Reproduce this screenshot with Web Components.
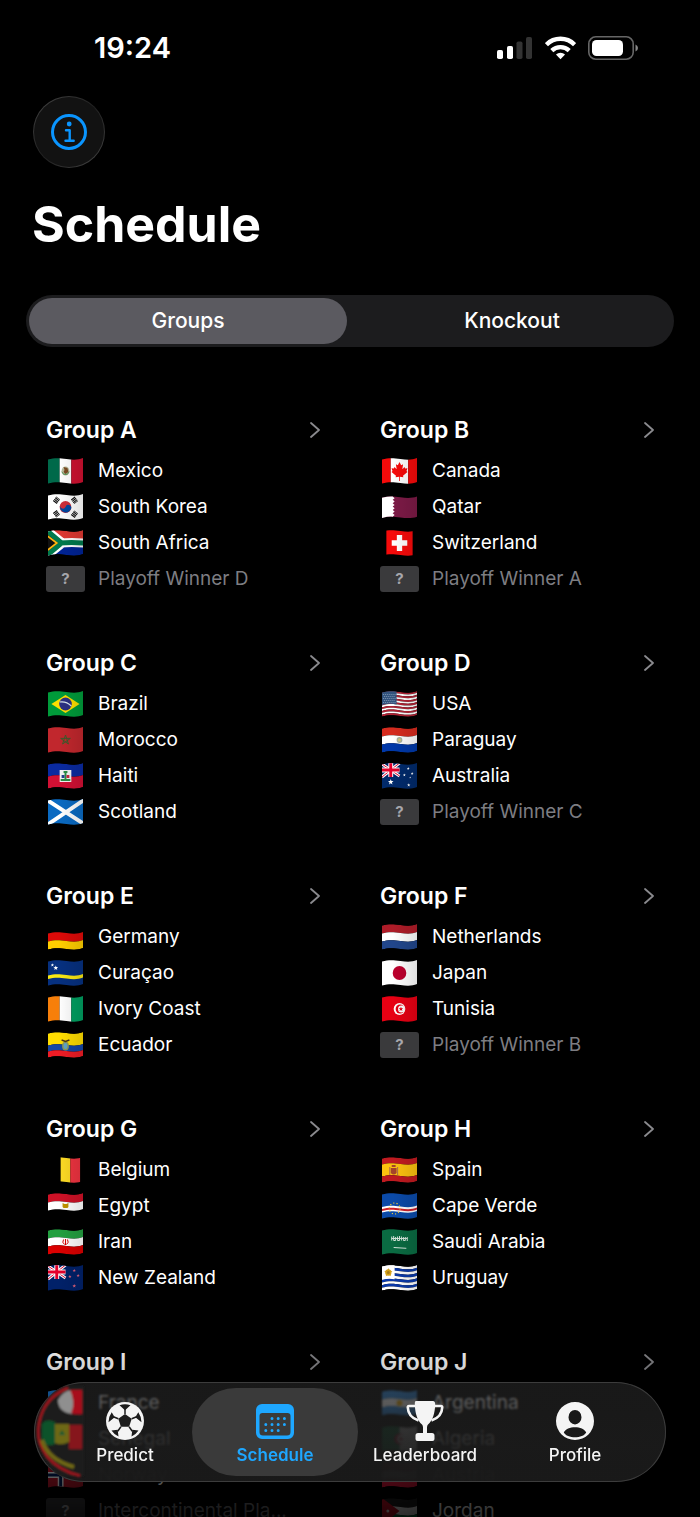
<!DOCTYPE html>
<html lang="en">
<head>
<meta charset="utf-8">
<meta name="viewport" content="width=device-width, initial-scale=1">
<title>Schedule</title>
<style>
  html, body {
    margin: 0;
    height: 100%;
    background: #000;
    color: #fff;
    font-family: Inter, "Liberation Sans", sans-serif;
  }
</style>
</head>
<body>
<schedule-app>
  <status-bar slot="status">19:24</status-bar>
  <info-button slot="header"></info-button>
  <page-title slot="header">Schedule</page-title>
  <segmented-control slot="header" options="Groups,Knockout" selected="Groups"></segmented-control>

  <group-card heading="Group A">
    <team-row flag="mexico">Mexico</team-row>
    <team-row flag="southKorea">South Korea</team-row>
    <team-row flag="southAfrica">South Africa</team-row>
    <team-row>Playoff Winner D</team-row>
  </group-card>
  <group-card heading="Group B">
    <team-row flag="canada">Canada</team-row>
    <team-row flag="qatar">Qatar</team-row>
    <team-row flag="switzerland">Switzerland</team-row>
    <team-row>Playoff Winner A</team-row>
  </group-card>
  <group-card heading="Group C">
    <team-row flag="brazil">Brazil</team-row>
    <team-row flag="morocco">Morocco</team-row>
    <team-row flag="haiti">Haiti</team-row>
    <team-row flag="scotland">Scotland</team-row>
  </group-card>
  <group-card heading="Group D">
    <team-row flag="usa">USA</team-row>
    <team-row flag="paraguay">Paraguay</team-row>
    <team-row flag="australia">Australia</team-row>
    <team-row>Playoff Winner C</team-row>
  </group-card>
  <group-card heading="Group E">
    <team-row flag="germany">Germany</team-row>
    <team-row flag="curacao">Curaçao</team-row>
    <team-row flag="ivoryCoast">Ivory Coast</team-row>
    <team-row flag="ecuador">Ecuador</team-row>
  </group-card>
  <group-card heading="Group F">
    <team-row flag="netherlands">Netherlands</team-row>
    <team-row flag="japan">Japan</team-row>
    <team-row flag="tunisia">Tunisia</team-row>
    <team-row>Playoff Winner B</team-row>
  </group-card>
  <group-card heading="Group G">
    <team-row flag="belgium">Belgium</team-row>
    <team-row flag="egypt">Egypt</team-row>
    <team-row flag="iran">Iran</team-row>
    <team-row flag="newZealand">New Zealand</team-row>
  </group-card>
  <group-card heading="Group H">
    <team-row flag="spain">Spain</team-row>
    <team-row flag="capeVerde">Cape Verde</team-row>
    <team-row flag="saudiArabia">Saudi Arabia</team-row>
    <team-row flag="uruguay">Uruguay</team-row>
  </group-card>
  <group-card heading="Group I">
    <team-row flag="france">France</team-row>
    <team-row flag="senegal">Senegal</team-row>
    <team-row flag="norway">Norway</team-row>
    <team-row>Intercontinental Pla...</team-row>
  </group-card>
  <group-card heading="Group J">
    <team-row flag="argentina">Argentina</team-row>
    <team-row flag="algeria">Algeria</team-row>
    <team-row flag="austria">Austria</team-row>
    <team-row flag="jordan">Jordan</team-row>
  </group-card>

  <tab-bar slot="tabs">
    <tab-item icon="ball">Predict</tab-item>
    <tab-item icon="calendar" active>Schedule</tab-item>
    <tab-item icon="trophy">Leaderboard</tab-item>
    <tab-item icon="person">Profile</tab-item>
  </tab-bar>
</schedule-app>

<script>
// ---- flags: drawn as waving cloth in a 36 x 26 box ----

// horizontal stripe that follows the wave of the cloth
function band(y0, y1, color) {
  return `<path fill="${color}" d="M0 ${y0 + 1.5}C7 ${y0 - 0.5} 12 ${y0} 19 ${y0 + 1}S31 ${y0 + 2} 36 ${y0}V${y1}C31 ${y1 + 2} 26 ${y1 + 2} 19 ${y1 + 1}C12 ${y1} 7 ${y1 - 0.5} 0 ${y1 + 1.5}Z"/>`;
}

function bar(x, width, color) {
  return `<rect x="${x}" width="${width}" height="28" fill="${color}"/>`;
}

function fill(color) {
  return bar(0, 36, color);
}

function star(cx, cy, r, color) {
  let points = [];
  for (let i = 0; i < 10; i++) {
    let radius = i % 2 ? r * 0.42 : r;
    let angle = Math.PI * (i / 5 - 0.5);
    points.push((cx + radius * Math.cos(angle)).toFixed(2) + ',' + (cy + radius * Math.sin(angle)).toFixed(2));
  }
  return `<polygon fill="${color}" points="${points.join(' ')}"/>`;
}

function dot(cx, cy, r, color) {
  return `<circle cx="${cx}" cy="${cy}" r="${r}" fill="${color}"/>`;
}

function stripes(colors) {
  let step = 24 / colors.length;
  return colors.map((color, i) => band(i * step, (i + 1) * step, color)).join('');
}

const unionJack = `
  <path fill="#012169" d="M0 0h18v14H0z"/>
  <path stroke="#fff" stroke-width="3" d="M0 1l18 12M18 0L0 14"/>
  <path stroke="#e4002b" stroke-width="1" d="M0 1l18 12M18 0L0 14"/>
  <path stroke="#fff" stroke-width="5" d="M9 0v14M0 7h18"/>
  <path stroke="#e4002b" stroke-width="3" d="M9 0v14M0 7h18"/>`;

function bars3(a, b, c) {
  return bar(0, 12, a) + bar(12, 12, b) + bar(24, 12, c);
}

const flags = {
  mexico: bars3('#00694a', '#fff', '#ce1130') +
    `<ellipse cx="18" cy="13" rx="4" ry="4.500" fill="#b9bb9c"/><path fill="#7a4a22" d="M16 9l4 1 1 4-3 2-2-2 1-2z"/><path fill="none" stroke="#3f8a4a" d="M14 14q4 5 8 0"/>`,
  southKorea: fill('#fff') + dot(18, 13, 6, '#cd2e3a') +
    `<path fill="#0047a0" d="M12.300 11.500a3 3 0 0 0 5.700 1.500 3 3 0 0 1 5.800 1.700 6 6 0 0 1-11.500-3.200z"/>
    <path stroke="#111" stroke-width="5" stroke-dasharray="1.200 .5" d="M7 8.500l3.500-4.500M25.500 4l3.500 4.500M7 17.500l3.500 4.500M25.500 22.500l3.500-4.500"/>`,
  southAfrica: band(0, 12, '#de3831') + band(12, 24, '#002395') +
    `<path stroke="#fff" stroke-width="9" fill="none" d="M-3-1l18 14M-3 27l18-14M13 13q11-1 24 0"/>
    <path fill="#000" d="M0 4l12 9L0 22z"/>
    <path stroke="#007a4d" stroke-width="5" fill="none" d="M-3-1l17 14M-3 27l17-14M12 13q12-1 25 0"/>
    <path fill="#111" d="M0 7l8 6-8 6z"/><path fill="none" stroke="#ffb612" stroke-width="1.800" d="M-1 5.500l10 7.500-10 7.500"/>`,
  canada: bar(0, 9, '#f60a0a') + bar(9, 18, '#fff') + bar(27, 9, '#f60a0a') +
    `<path fill="#f60a0a" d="M18 4l1.700 3.200 2-1-.8 5 2.300-2.200.6 1.600 2.400-.3-1 2.800 1 .9-4.600 3.700.4 1.600-3.600-.6V23h-.8v-4.300l-3.600.6.4-1.600-4.600-3.700 1-.9-1-2.800 2.400.3.6-1.600 2.300 2.200-.8-5 2 1z"/>`,
  qatar: `<g transform="translate(0 2.500) scale(1 .84)">${band(0, 24, '#7c1a46')}<path fill="#fff" d="M0 1.500Q7-.5 11 0l2 2-2 2 2 2-2 2 2 2-2 2 2 2-2 2 2 2-2 2 2 2-2 2Q7 23.500 0 25.500z"/></g>`,
  switzerland: `<rect x="4.500" width="27" height="28" fill="#f60a0a"/><path stroke="#fff" stroke-width="5.500" d="M18 5v16M10 13h16"/>`,
  brazil: fill('#009b3a') + `<path fill="#fedf00" d="M18 4l14.500 9L18 22 3.500 13z"/>` + dot(18, 13, 6.500, '#2b2f83') +
    `<path fill="none" stroke="#d8e4ee" stroke-width="1.200" d="M12 11q7-1 12 4"/>`,
  morocco: fill('#c1272d') + `<path fill="none" stroke="#3d5a2c" stroke-width="1" d="M18 8l3 9-8-5.600h10L15 17z"/>`,
  haiti: band(0, 12, '#0a2aa0') + band(12, 24, '#d21034') +
    `<path fill="#f4f4f4" d="M12 7h12v12H12z"/><path fill="#2c8f45" d="M16 8h4v2h-4zM13 16h10v2H13zM17 10h2v6h-2z"/><path fill="#24408e" d="M14 12h3v3h-3z"/><path fill="#c8283c" d="M19 12h3v3h-3z"/>`,
  scotland: fill('#0a6ac2') + `<path stroke="#fff" stroke-width="4" d="M-1 1l38 24M-1 26L37 1"/>`,
  usa: stripes(['#b22234', '#fff', '#b22234', '#fff', '#b22234', '#fff', '#b22234', '#fff', '#b22234', '#fff', '#b22234', '#fff', '#b22234']) +
    `<path fill="#33547e" d="M0 0h15v13.500q-8-1.500-15 .5z"/><path stroke="#a9bacd" stroke-width=".8" stroke-dasharray=".8 1.200" d="M1 3.500h13M2 5.500h12M1 7.500h13M2 9.500h12M1 11.500h13"/>`,
  paraguay: stripes(['#d52b1e', '#fff', '#0038a8']) + dot(18, 13, 3, '#a9b3a0') + dot(18, 13, 1.500, '#d9c979'),
  australia: fill('#012a6b') + unionJack + star(9, 19, 3, '#fff') + star(27, 5.500, 1.500, '#fff') + star(31, 10.500, 1.500, '#fff') +
    star(23, 12, 1.500, '#fff') + star(27.500, 22, 1.800, '#fff') + star(29, 14.500, 1, '#fff'),
  germany: band(8, 16, '#dd0a08') + band(16, 24, '#ffce00'),
  curacao: fill('#06307f') + band(14, 17.500, '#f9e814') + star(4.500, 5, 1.800, '#fff') + star(8, 8, 2.600, '#fff'),
  ivoryCoast: bars3('#f77f0a', '#fff', '#009e60'),
  ecuador: band(0, 12, '#ffdd00') + band(12, 18, '#1447a6') + band(18, 24, '#ee1c25') +
    `<ellipse cx="18" cy="14" rx="3.500" ry="4.500" fill="#8a9a5a"/><ellipse cx="18" cy="14" rx="2" ry="3" fill="#5fa4c8"/><path stroke="#49341f" stroke-width="1.500" d="M14 8l4 1.500L22 8"/>`,
  netherlands: stripes(['#ae1c28', '#fff', '#21468b']),
  japan: fill('#fff') + dot(18, 13, 7, '#bc002d'),
  tunisia: fill('#e70013') + dot(18, 13, 6, '#fff') + dot(18.500, 13, 4.500, '#e70013') + dot(20, 13, 3.500, '#fff') + star(19.500, 13, 2.500, '#e70013'),
  belgium: bar(13, 10, '#fdda24') + bar(23, 10, '#ef3340'),
  egypt: band(0, 8, '#ce1126') + band(8, 16, '#fff') + `<path fill="#c09300" d="M15 10l2 1h2l2-1v4l-1 1h-4l-1-1z"/>`,
  iran: stripes(['#239f40', '#fff', '#da0000']) + `<path fill="none" stroke="#da0000" stroke-width="1" d="M18 10v6M16 10.500q-2 3 1 5M20 10.500q2 3-1 5"/>`,
  newZealand: fill('#012169') + unionJack + star(27, 5.500, 1.800, '#e0607a') + star(31, 10.500, 1.800, '#e0607a') +
    star(22.500, 11.500, 1.800, '#e0607a') + star(27, 21, 2, '#e0607a'),
  spain: band(0, 6, '#c01a20') + band(6, 18, '#fcc10f') + band(18, 24, '#c01a20') +
    `<path fill="#a5442b" d="M9 11h6v5q-3 3-6 0zM10 8h4v2h-4z"/><path stroke="#b5714d" stroke-width="1.200" d="M8 10v8M16 10v8"/>`,
  capeVerde: fill('#0b4aa8') + band(12.500, 18, '#fff') + band(14.500, 16.500, '#cf2027') +
    `<circle cx="13" cy="15.500" r="5.500" fill="none" stroke="#f0cc3a" stroke-width="1.200" stroke-dasharray="1.200 2.200"/>`,
  saudiArabia: fill('#0a6b42') + `<path stroke="#d5e5db" stroke-width="1" fill="none" d="M10 7.500v4M12 7v4.500h2V8M16 7.500v4h2V7M20 7.500v4M22 8v3.500h2V8M26 8v4M10 9.500h16M12 18.500l13 .8"/>`,
  uruguay: stripes(['#fff', '#0a38a8', '#fff', '#0a38a8', '#fff', '#0a38a8', '#fff', '#0a38a8', '#fff']) +
    `<path fill="#fff" d="M0 0h13v14.300q-6-1.500-13 .5z"/>` + star(6.500, 7.500, 4.500, '#d4a017') + dot(6.500, 7.500, 3.200, '#d4a017') + dot(6.500, 7.500, 1.500, '#a57a1a'),
  france: bars3('#1b6fc0', '#fff', '#ef1c2f'),
  senegal: bars3('#00853f', '#fdef42', '#e31b23') + star(18, 13, 4, '#00853f'),
  norway: fill('#c0182c') + `<path stroke="#fff" stroke-width="6" d="M13 0v28M0 13h36"/><path stroke="#00205b" stroke-width="3" d="M13 0v28M0 13h36"/>`,
  argentina: stripes(['#2f8fe8', '#fff', '#2f8fe8']) + dot(18, 13, 3, '#f6b40e'),
  algeria: bar(0, 18, '#00793f') + bar(18, 18, '#fff') + dot(18, 13, 5.500, '#d21034') + dot(20, 13, 4.500, '#fff') + star(19.500, 13, 2.500, '#d21034'),
  austria: stripes(['#d8183a', '#fff', '#d8183a']),
  jordan: stripes(['#222', '#fff', '#007a3d']) + `<path fill="#ce1126" d="M0 0l18 13L0 27z"/>` + dot(6, 13, 1.500, '#fff')
};

class CountryFlag extends HTMLElement {
  constructor() {
    super();
    this.attachShadow({ mode: 'open' });
  }

  connectedCallback() {
    this.shadowRoot.innerHTML = `
      <style>
        :host { display: block; line-height: 0; }
      </style>
      <svg width="35" height="26" viewBox="0 0 36 26" preserveAspectRatio="none" fill="none" aria-hidden="true">
        <defs>
          <clipPath id="cloth">${band(0, 24, '#fff')}</clipPath>
          <linearGradient id="shade">
            <stop offset=".3" stop-color="#000" stop-opacity="0"/>
            <stop offset="1" stop-color="#000" stop-opacity=".12"/>
          </linearGradient>
        </defs>
        <g clip-path="url(#cloth)">
          ${flags[this.getAttribute('name')]}
          <rect width="36" height="28" fill="url(#shade)"/>
        </g>
      </svg>
    `;
  }
}

class TeamRow extends HTMLElement {
  constructor() {
    super();
    this.attachShadow({ mode: 'open' });
  }

  connectedCallback() {
    let flag = this.getAttribute('flag');
    this.shadowRoot.innerHTML = `
      <style>
        :host {
          display: flex;
          align-items: center;
          gap: 13px;
          height: 36px;
          font-size: 19px;
          line-height: 24px;
          color: ${flag ? '#fff' : '#7d7d82'};
        }
        .badge {
          flex: none;
          display: grid;
          place-items: center;
          width: 39px;
          height: 26px;
        }
        .unknown {
          border-radius: 3px;
          background: #3a3a3c;
          color: #a6a6ab;
          font-size: 15px;
          font-weight: 700;
          line-height: 26px;
        }
        .name {
          white-space: nowrap;
        }
      </style>
      ${flag
        ? `<span class="badge"><country-flag name="${flag}"></country-flag></span>`
        : `<span class="badge unknown">?</span>`}
      <span class="name"><slot></slot></span>
    `;
  }
}

class GroupCard extends HTMLElement {
  constructor() {
    super();
    this.attachShadow({ mode: 'open' });
  }

  connectedCallback() {
    let heading = this.getAttribute('heading');
    this.shadowRoot.innerHTML = `
      <style>
        :host {
          display: block;
          min-width: 0;
          padding: 20px;
        }
        a {
          display: flex;
          align-items: center;
          justify-content: space-between;
          margin-bottom: 9px;
          color: inherit;
          text-decoration: none;
        }
        h2 {
          margin: 0;
          font-size: 23px;
          font-weight: 600;
          line-height: 28px;
        }
      </style>
      <a href="#${heading.toLowerCase().replace(' ', '-')}">
        <h2>${heading}</h2>
        <svg width="10" height="18" viewBox="0 0 10 18" fill="none" stroke="#8a8a8e" stroke-width="1.800" stroke-linecap="round" stroke-linejoin="round" aria-hidden="true"><path d="M1 2l8 7-8 7"/></svg>
      </a>
      <slot></slot>
    `;
  }
}

class StatusBar extends HTMLElement {
  constructor() {
    super();
    this.attachShadow({ mode: 'open' });
    this.shadowRoot.innerHTML = `
      <style>
        :host {
          display: flex;
          align-items: center;
          justify-content: space-between;
          height: 96px;
          padding: 0 62px 0 94px;
          font-size: 29px;
          font-weight: 600;
          line-height: 34px;
        }
        .icons {
          display: flex;
          align-items: center;
          gap: 12px;
        }
      </style>
      <slot></slot>
      <span class="icons">
        <svg width="36" height="24" viewBox="0 0 36 24" fill="#fff" aria-hidden="true">
          <rect y="14" width="6" height="9" rx="1.800"/>
          <rect x="10" y="10" width="6" height="13" rx="1.800"/>
          <rect x="19.500" y="5.500" width="6" height="17.500" rx="1.800" fill="#333"/>
          <rect x="29" y="1" width="6" height="22" rx="1.800" fill="#333"/>
        </svg>
        <svg width="31" height="24" viewBox="0 0 32 24" fill="none" stroke="#fff" stroke-width="4.500" aria-hidden="true">
          <path d="M1.500 8.500a20.500 20.500 0 0 1 29 0"/>
          <path d="M7 14.700a13 13 0 0 1 18 0"/>
          <path fill="#fff" stroke="none" d="M16 23.500l-4.700-4.700a7 7 0 0 1 9.400 0z"/>
        </svg>
        <svg width="50" height="24" viewBox="0 0 50 24" aria-hidden="true">
          <rect x=".8" y=".8" width="44.400" height="22.400" rx="7" fill="none" stroke="#666" stroke-width="1.600"/>
          <rect x="4" y="4" width="31" height="16" rx="4.500" fill="#fff"/>
          <path fill="#888" d="M47.500 8.500q2.500 1 2.500 3.500t-2.500 3.500z"/>
        </svg>
      </span>
    `;
  }
}

class InfoButton extends HTMLElement {
  constructor() {
    super();
    this.attachShadow({ mode: 'open' });
    this.shadowRoot.innerHTML = `
      <style>
        :host {
          display: block;
          padding: 0 33px;
        }
        button {
          display: grid;
          place-items: center;
          box-sizing: border-box;
          width: 72px;
          height: 72px;
          padding: 0;
          border: 1px solid transparent;
          border-radius: 50%;
          background:
            linear-gradient(#121212, #121212) padding-box,
            linear-gradient(135deg, #484848, #202020 50%, #484848) border-box;
        }
      </style>
      <button type="button" aria-label="Info">
        <svg width="36" height="36" viewBox="0 0 36 36" fill="none" stroke="#0a95ff" stroke-width="3" aria-hidden="true">
          <circle cx="18" cy="18" r="16.500"/>
          <circle cx="18.200" cy="10" r="2.400" fill="#0a95ff" stroke="none"/>
          <path stroke-width="2.400" stroke-linecap="round" stroke-linejoin="round" d="M15 16.200h3.700v10.400M14.500 26.800h8.200"/>
        </svg>
      </button>
    `;
  }
}

class PageTitle extends HTMLElement {
  constructor() {
    super();
    this.attachShadow({ mode: 'open' });
    this.shadowRoot.innerHTML = `
      <style>
        :host {
          display: block;
          padding: 24px 32px 39px;
        }
        h1 {
          margin: 0;
          font-size: 50px;
          font-weight: 700;
          line-height: 64px;
        }
      </style>
      <h1><slot></slot></h1>
    `;
  }
}

class SegmentedControl extends HTMLElement {
  constructor() {
    super();
    this.attachShadow({ mode: 'open' });
  }

  connectedCallback() {
    let selected = this.getAttribute('selected');
    let options = this.getAttribute('options').split(',');
    this.shadowRoot.innerHTML = `
      <style>
        :host {
          display: grid;
          grid-auto-flow: column;
          grid-auto-columns: 1fr;
          gap: 6px;
          margin: 0 26px;
          padding: 3px;
          border-radius: 26px;
          background: #1c1c1e;
        }
        button {
          height: 46px;
          padding: 0;
          border: 0;
          border-radius: 23px;
          background: none;
          color: #fff;
          font: 500 21px/28px Inter, "Liberation Sans", sans-serif;
        }
        button[aria-pressed="true"] {
          background: #5b5a60;
        }
      </style>
      ${options.map(o => `<button type="button" aria-pressed="${o === selected}">${o}</button>`).join('')}
    `;
    this.shadowRoot.querySelectorAll('button').forEach(button => {
      button.addEventListener('click', () => {
        this.shadowRoot.querySelectorAll('button').forEach(b => b.setAttribute('aria-pressed', b === button));
      });
    });
  }
}

const icons = {
  ball: `
    <circle cx="20" cy="20" r="19" fill="#f4f4f4"/>
    <g fill="#1c1c1c" stroke="#1c1c1c">
      <path stroke="none" d="M20 13l6.700 4.800-2.600 7.900h-8.200l-2.600-7.900z"/>
      <path fill="none" stroke-width="1.500" d="M20 13V8M26.700 17.800l5-2M24.100 25.700l3.200 4.500M15.900 25.700l-3.200 4.500M13.300 17.800l-5-2"/>
      <path stroke="none" d="M14.500 4.200Q20 2.200 25.500 4.200L20 9.200zM33.300 11.200q3.200 4.500 3.200 10l-6.200-5zM33.500 29.500q-3 4.500-7 6l.8-6.700zM6.500 29.500q3 4.500 7 6l-.8-6.700zM6.700 11.200q-3.200 4.500-3.200 10l6.200-5z"/>
    </g>`,
  calendar: `
    <path fill="#1ea7ff" fill-rule="evenodd" d="M7 3h26a6 6 0 0 1 6 6v23a6 6 0 0 1-6 6H7a6 6 0 0 1-6-6V9a6 6 0 0 1 6-6zM7.500 12A3 3 0 0 0 4.500 15v16a3.500 3.500 0 0 0 3.500 3.500h24a3.500 3.500 0 0 0 3.500-3.500V15a3 3 0 0 0-3-3z"/>
    <path stroke="#1ea7ff" stroke-width="3" stroke-linecap="round" d="M17 17.500h0M23.200 17.500h0M29.400 17.500h0M10.800 23.500h0M17 23.500h0M23.200 23.500h0M29.400 23.500h0M10.800 29.500h0M17 29.500h0M23.200 29.500h0"/>`,
  trophy: `
    <path fill="#f4f4f4" d="M12 0h16q2 0 2.200 3c-.2 10-2.700 16.500-7.200 20.500q-1 1-1 3V32h5q2.500 0 2.500 2.500V38q0 2-2 2h-15q-2 0-2-2v-3.500q0-2.500 2.500-2.500h5v-5.500q0-2-1-3C12.500 19.500 10 13 9.800 3 10 0 10 0 12 0z"/>
    <path fill="none" stroke="#f4f4f4" stroke-width="2.600" stroke-linejoin="round" d="M10 5H4q-1.200 0-1.200 1.500C3 13.500 7.500 17.500 13.500 19.500M30 5h6q1.200 0 1.200 1.500C37 13.500 32.500 17.500 26.500 19.500"/>`,
  person: `
    <path fill="#f4f4f4" fill-rule="evenodd" d="M20 1a19 19 0 1 1 0 38 19 19 0 0 1 0-38zM20 9a6.500 7.200 0 1 0 0 14.400A6.500 7.200 0 0 0 20 9zM8.800 31.500C12 37.800 28 37.800 31.200 31.500 29.500 28 25 26.200 20 26.200S10.500 28 8.800 31.500z"/>`
};

class TabItem extends HTMLElement {
  constructor() {
    super();
    this.attachShadow({ mode: 'open' });
  }

  connectedCallback() {
    let active = this.hasAttribute('active');
    this.shadowRoot.innerHTML = `
      <style>
        :host { display: block; min-width: 0; }
        a {
          display: flex;
          flex-direction: column;
          align-items: center;
          gap: 4px;
          margin: 0 -8px;
          padding: 13px 0 11px;
          border-radius: 44px;
          color: #f4f4f4;
          font-size: 17px;
          font-weight: 500;
          line-height: 20px;
          text-decoration: none;
        }
        a[aria-current] {
          background: #3a3a3a;
          color: #1ea7ff;
          font-weight: 600;
        }
      </style>
      <a href="#${this.textContent.toLowerCase()}" ${active ? 'aria-current="page"' : ''}>
        <svg width="40" height="40" viewBox="0 0 40 40" aria-hidden="true">${icons[this.getAttribute('icon')]}</svg>
        <slot></slot>
      </a>
    `;
  }
}

class TabBar extends HTMLElement {
  constructor() {
    super();
    this.attachShadow({ mode: 'open' });
    this.shadowRoot.innerHTML = `
      <style>
        :host {
          position: relative;
          display: block;
          overflow: hidden;
          border-radius: 50px;
          background: linear-gradient(rgba(40, 40, 40, .62) 25%, rgba(31, 31, 31, .82) 45%, rgba(30, 30, 30, .86) 65%, rgba(26, 26, 26, .97) 82%);
          box-shadow: inset 0 0 0 1px #3c3c3c;
          backdrop-filter: blur(1px);
        }
        .lens {
          position: absolute;
          left: 0;
          top: 0;
        }
        nav {
          position: relative;
          display: grid;
          grid-template-columns: repeat(4, 1fr);
          padding: 6px 16px;
        }
      </style>
      <svg class="lens" width="60" height="100" viewBox="0 0 60 100" fill="none" aria-hidden="true">
        <defs><filter id="soft"><feGaussianBlur stdDeviation="1"/></filter></defs>
        <g filter="url(#soft)">
          <path fill="#1b1b1b" d="M4 42Q8 14 28 4h22v90H24Q4 76 4 42z"/>
          <path fill="#8f8f8f" d="M24 18q5-9 13-10 4 11 1 24-14-2-14-14z"/>
          <path fill="#a70f1c" d="M36 8h12v24q-6 1-11-1 5-10-1-23z"/>
          <path stroke="#a5161c" stroke-width="2.500" d="M34 6C14 14 5 30 4 48s12 38 42 46"/>
          <path fill="#07522b" d="M8 42q4-6 13-2v22q-10 4-13-4z"/>
          <path fill="#6d6714" d="M21 42h14v18q-8 4-14 1z"/>
          <path fill="#86181a" d="M35 43h13v24H35z"/>
          <path stroke="#6f6712" stroke-width="4" d="M8 58q6 20 32 27"/>
          <path fill="#0d5930" d="M25 53l3-5 3 5z"/>
        </g>
      </svg>
      <nav aria-label="Main"><slot></slot></nav>
    `;
  }
}

class ScheduleApp extends HTMLElement {
  constructor() {
    super();
    this.attachShadow({ mode: 'open' });
    this.shadowRoot.innerHTML = `
      <style>
        :host {
          display: block;
          height: 100%;
          overflow-y: auto;
          scrollbar-width: none;
        }
        main {
          display: grid;
          grid-template-columns: 1fr 1fr;
          gap: 12px 20px;
          padding: 49px 26px 120px;
        }
        /* content dims towards the bottom edge, under the tab bar */
        .fade {
          position: fixed;
          inset: auto 0 0;
          height: 190px;
          background: linear-gradient(transparent, rgba(0, 0, 0, .82));
          pointer-events: none;
        }
        .tabs {
          position: fixed;
          inset: auto 34px 35px;
        }
      </style>
      <slot name="status"></slot>
      <header><slot name="header"></slot></header>
      <main><slot></slot></main>
      <div class="fade"></div>
      <div class="tabs"><slot name="tabs"></slot></div>
    `;
  }
}

customElements.define('country-flag', CountryFlag);
customElements.define('team-row', TeamRow);
customElements.define('group-card', GroupCard);
customElements.define('status-bar', StatusBar);
customElements.define('info-button', InfoButton);
customElements.define('page-title', PageTitle);
customElements.define('segmented-control', SegmentedControl);
customElements.define('tab-item', TabItem);
customElements.define('tab-bar', TabBar);
customElements.define('schedule-app', ScheduleApp);
</script>
</body>
</html>
